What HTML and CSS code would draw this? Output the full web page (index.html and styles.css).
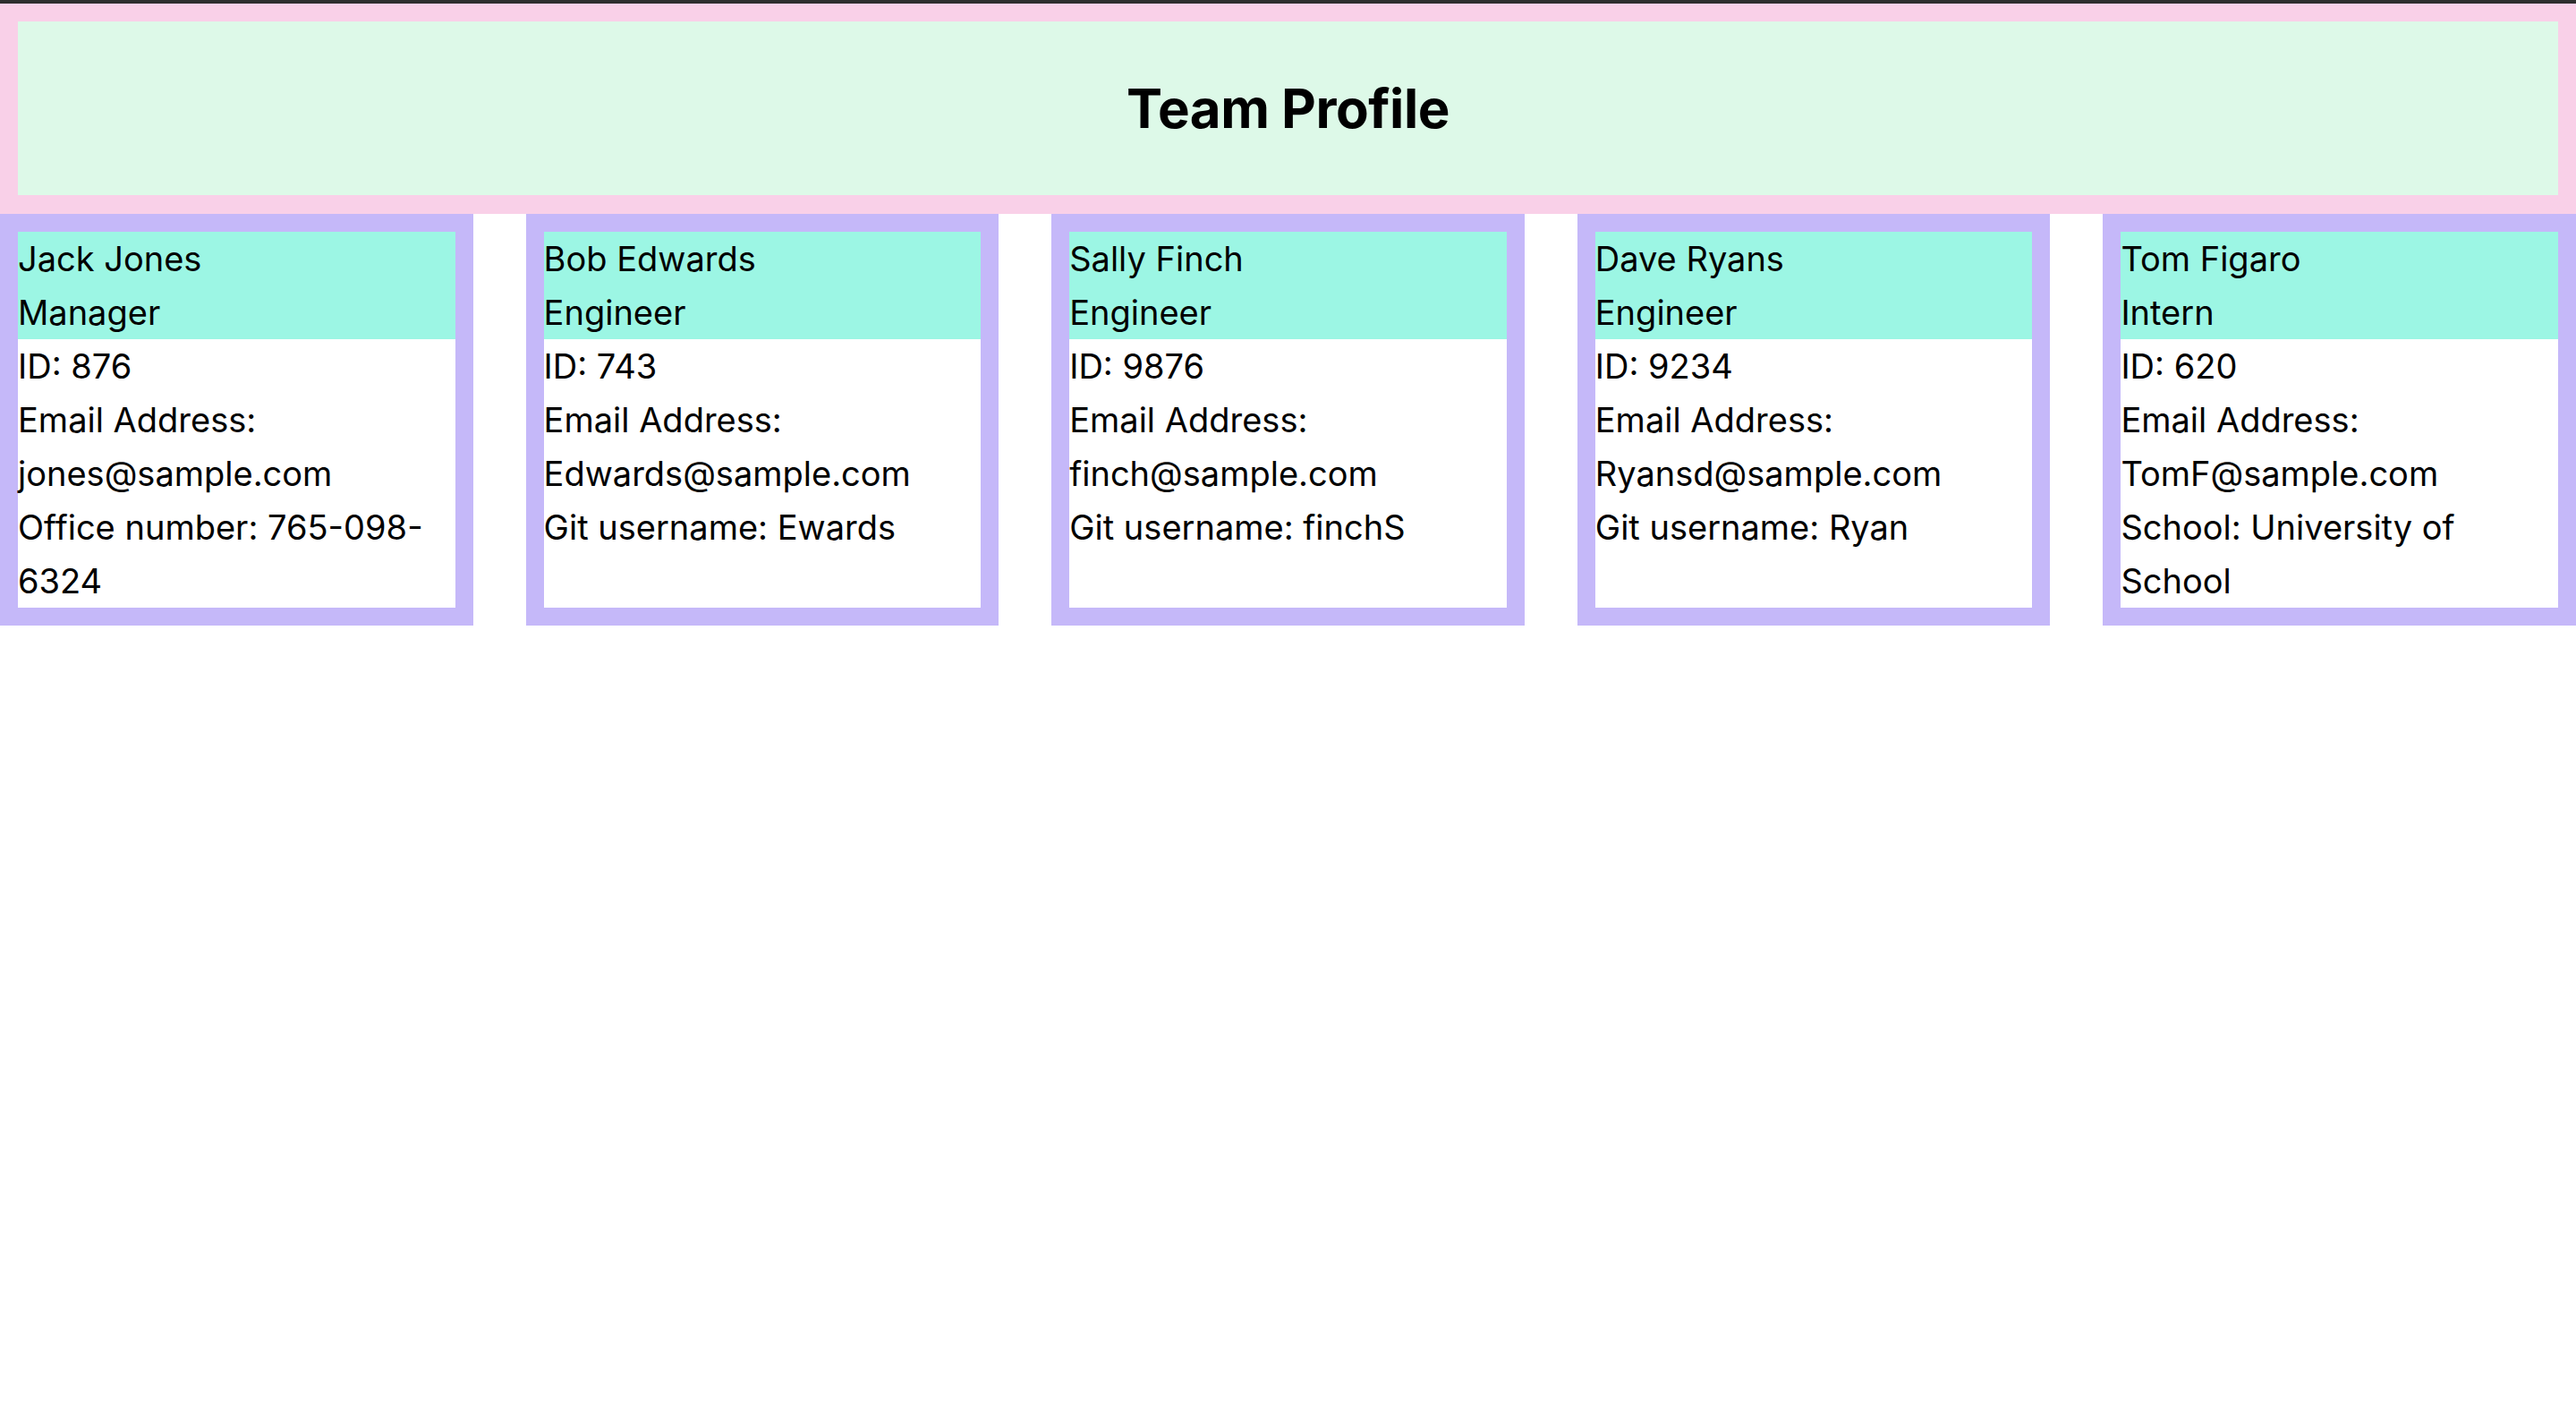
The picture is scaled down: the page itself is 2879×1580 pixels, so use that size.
FILE: index.html
```html
<!DOCTYPE html>
<html lang="en">
<head>
<meta charset="utf-8">
<title>Team Profile</title>
<link rel="stylesheet" href="styles.css">
</head>
<body>
<div class="topbar"></div>
<header class="banner">
  <div class="banner-inner">
    <h1 class="title">Team Profile</h1>
  </div>
</header>
<main class="cards">
  <article class="card">
    <div class="card-head">
      <div>Jack Jones</div>
      <div>Manager</div>
    </div>
    <div class="card-body">
      <div>ID: 876</div>
      <div>Email Address: jones@sample.com</div>
      <div>Office number: 765-098-6324</div>
    </div>
  </article>
  <article class="card">
    <div class="card-head">
      <div>Bob Edwards</div>
      <div>Engineer</div>
    </div>
    <div class="card-body">
      <div>ID: 743</div>
      <div>Email Address: Edwards@sample.com</div>
      <div>Git username: Ewards</div>
    </div>
  </article>
  <article class="card">
    <div class="card-head">
      <div>Sally Finch</div>
      <div>Engineer</div>
    </div>
    <div class="card-body">
      <div>ID: 9876</div>
      <div>Email Address: finch@sample.com</div>
      <div>Git username: finchS</div>
    </div>
  </article>
  <article class="card">
    <div class="card-head">
      <div>Dave Ryans</div>
      <div>Engineer</div>
    </div>
    <div class="card-body">
      <div>ID: 9234</div>
      <div>Email Address: Ryansd@sample.com</div>
      <div>Git username: Ryan</div>
    </div>
  </article>
  <article class="card">
    <div class="card-head">
      <div>Tom Figaro</div>
      <div>Intern</div>
    </div>
    <div class="card-body">
      <div>ID: 620</div>
      <div>Email Address: TomF@sample.com</div>
      <div>School: University of School</div>
    </div>
  </article>
</main>
</body>
</html>
```
FILE: styles.css
```css
html, body {
  margin: 0;
  padding: 0;
  background: #ffffff;
}
body {
  font-family: Inter, "Liberation Sans", sans-serif;
  color: #000000;
}
.topbar {
  height: 4px;
  background: #2e2e2e;
}
.banner {
  background: #f9d0e8;
  padding: 20px 20px 21px 20px;
}
.banner-inner {
  background: #ddf9e8;
  height: 194px;
  display: flex;
  align-items: center;
  justify-content: center;
}
.title {
  margin: 0;
  font-size: 60px;
  font-weight: 700;
  letter-spacing: -0.5px;
}
.cards {
  display: flex;
  gap: 59px;
  align-items: flex-start;
}
.card {
  flex: 1 1 0;
  min-width: 0;
  border: 20px solid #c5b8f9;
  background: #ffffff;
  font-size: 38px;
  line-height: 60px;
  height: 420px;
}
.card-head {
  background: #9cf6e4;
}
```
